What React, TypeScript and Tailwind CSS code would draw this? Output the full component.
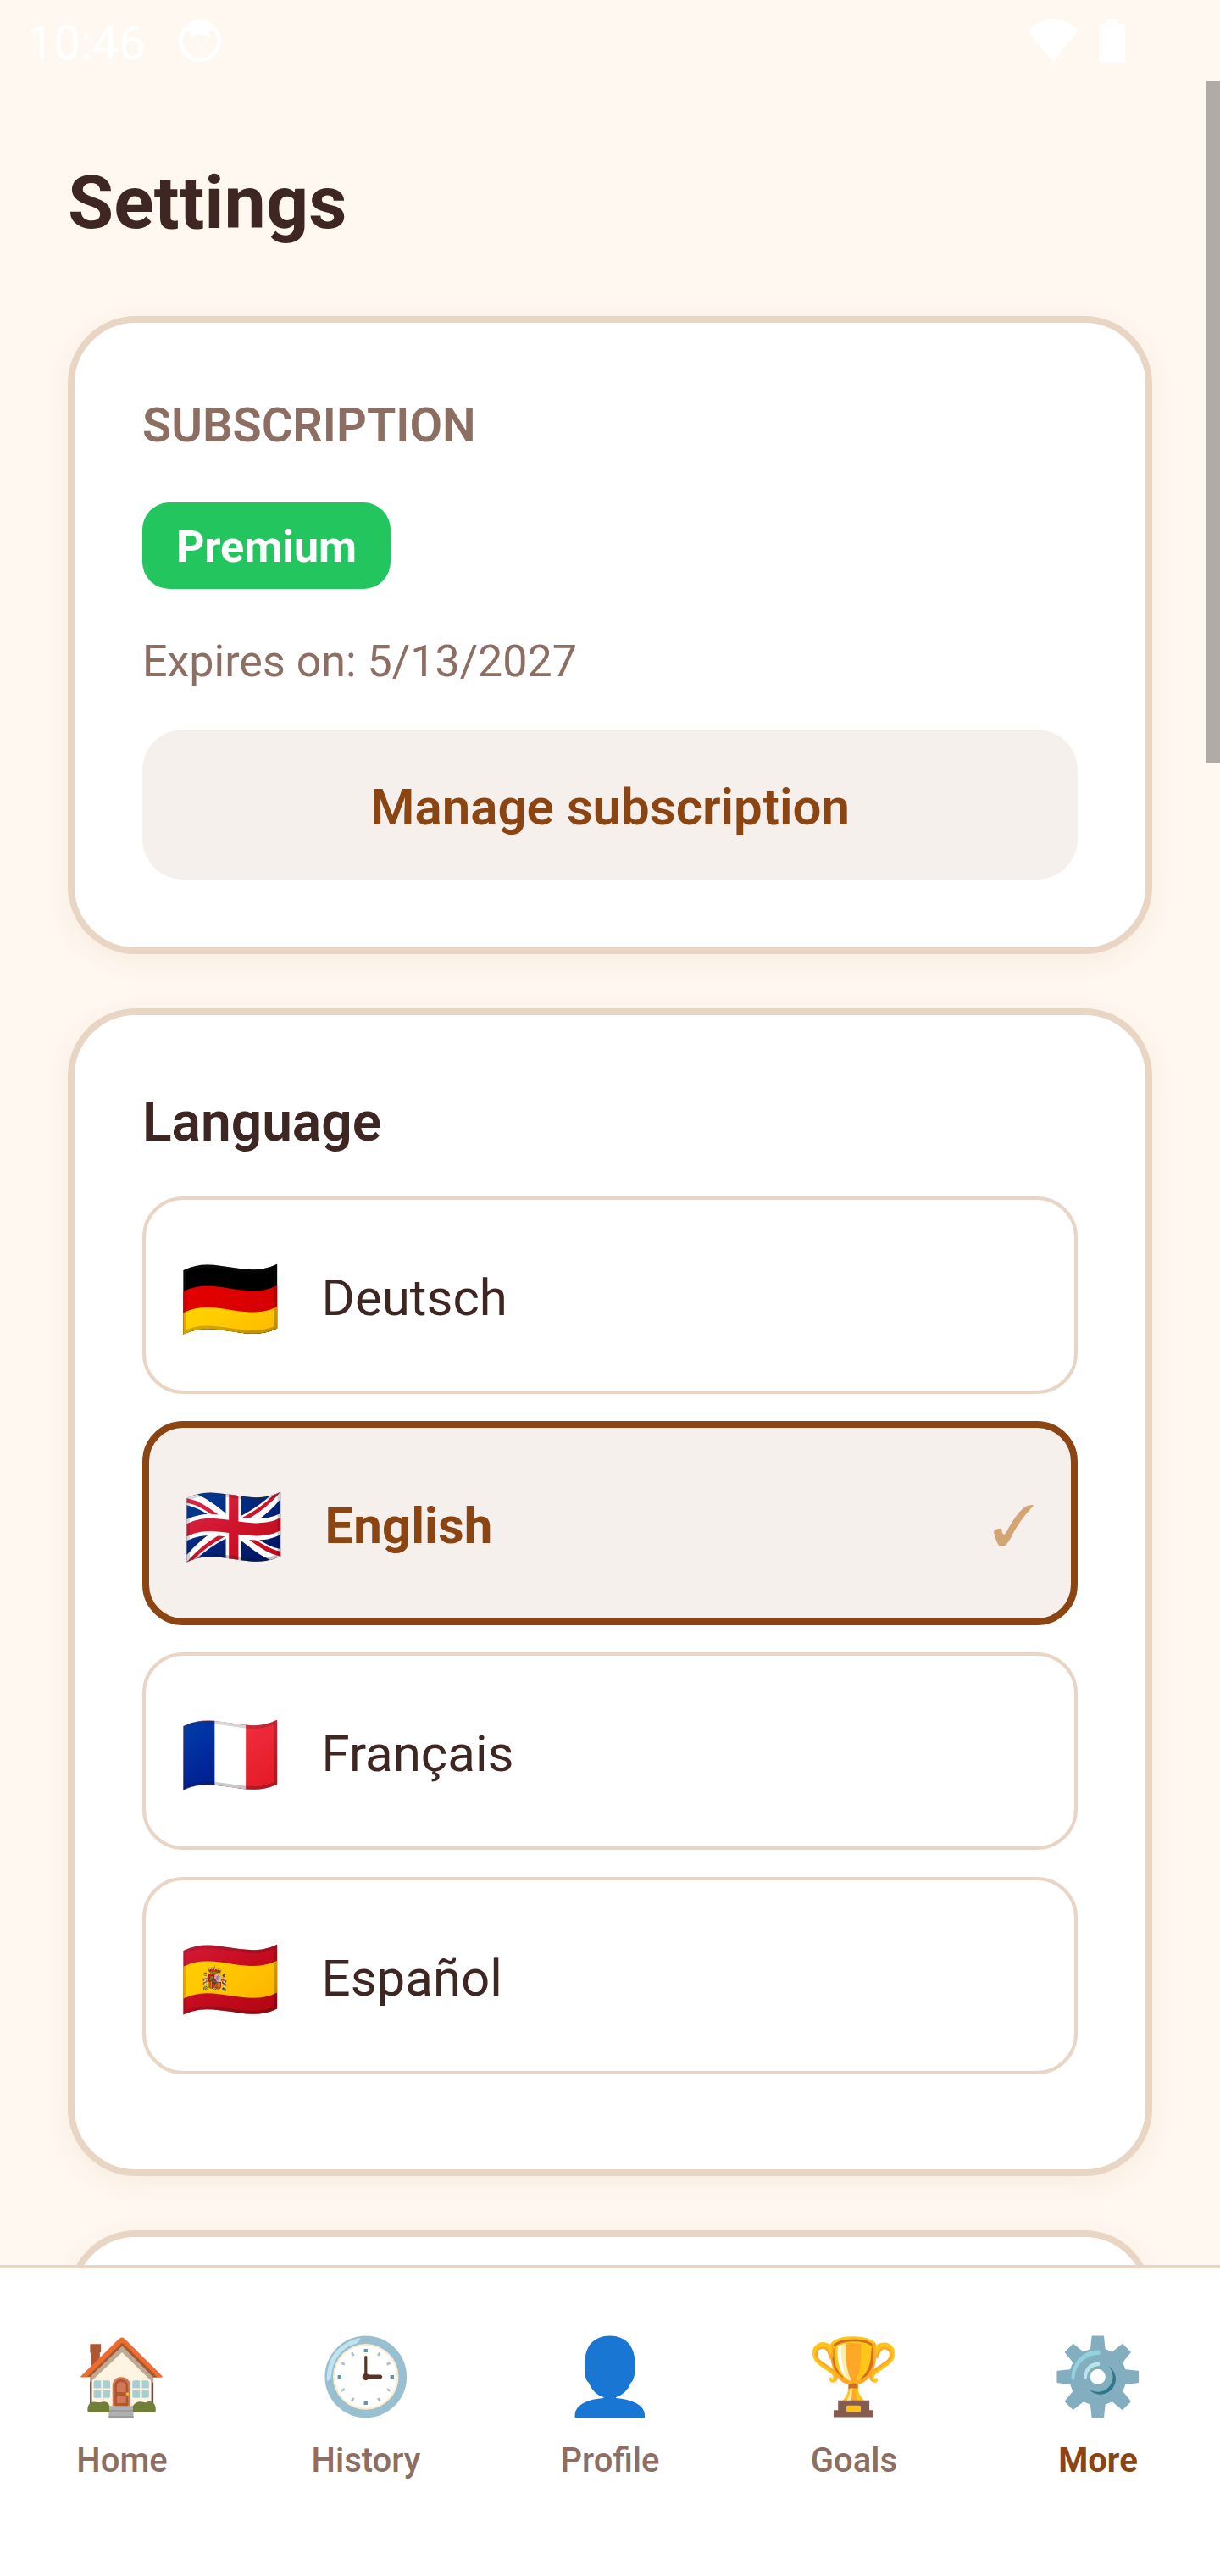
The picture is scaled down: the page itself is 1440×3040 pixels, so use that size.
import { useState } from "react";

interface Language {
  code: string;
  flag: string;
  name: string;
}

const LANGUAGES: Language[] = [
  { code: "de", flag: "🇩🇪", name: "Deutsch" },
  { code: "en", flag: "🇬🇧", name: "English" },
  { code: "fr", flag: "🇫🇷", name: "Français" },
  { code: "es", flag: "🇪🇸", name: "Español" },
];

const TABS = [
  { id: "home", icon: "🏠", label: "Home" },
  { id: "history", icon: "🕒", label: "History" },
  { id: "profile", icon: "👤", label: "Profile" },
  { id: "goals", icon: "🏆", label: "Goals" },
  { id: "more", icon: "⚙️", label: "More" },
];

const CARD =
  "shrink-0 rounded-[80px] border-8 border-[#E8D5C4] bg-white p-20 shadow-[0_8px_32px_rgba(139,69,19,0.07)]";

function StatusBar() {
  return (
    <div className="flex h-24 shrink-0 items-center pl-8 pr-28 text-white">
      <span className="pt-[6px] text-[56px] leading-[64px]">10:46</span>
      <svg className="ml-10" width="50" height="50" viewBox="0 0 50 50" fill="none">
        <circle cx="25" cy="25" r="22.5" stroke="currentColor" strokeWidth="5" />
        <path d="M8 14C12 6 18 3 25 3s13 3 17 11l-5-1-2 2 3 6-3 2-4-5H19l-4 5-3-2 3-6-2-2z" fill="currentColor" />
        <circle cx="14" cy="31" r="1.5" fill="currentColor" />
        <circle cx="29" cy="33" r="1.5" fill="currentColor" />
        <circle cx="32" cy="24" r="1.5" fill="currentColor" />
      </svg>
      <svg className="ml-auto" width="60" height="50" viewBox="0 0 60 50" fill="currentColor">
        <path d="M0 13C8 5 18 0 30 0s22 5 30 13L30 50z" />
      </svg>
      <svg className="ml-6" width="31" height="51" viewBox="0 0 31 51" fill="currentColor">
        <path d="M9 0h13v5h6a3 3 0 0 1 3 3v40a3 3 0 0 1-3 3H3a3 3 0 0 1-3-3V8a3 3 0 0 1 3-3h6z" />
      </svg>
    </div>
  );
}

function CheckMark() {
  return (
    <svg className="ml-auto mr-1 mt-[6px]" width="47" height="49" viewBox="0 0 47 49" fill="#D4A574">
      <path d="M0 31Q4 27 9 28Q10 34 12 35Q14 34 17 28Q27 10 36 3Q39 0 47 0Q47 1 44 4Q32 17 23 33Q17 46 13 48Q10 50 6 48Q1 40 0 31Z" />
    </svg>
  );
}

export default function App() {
  const [language, setLanguage] = useState("en");
  const [tab, setTab] = useState("more");

  return (
    <div className="flex h-screen flex-col bg-[#FFF8F0] font-['Roboto','Noto_Color_Emoji',sans-serif] text-[#3E2723]">
      <StatusBar />

      <main className="relative flex min-h-0 flex-1 flex-col overflow-hidden px-20 pt-20">
        <h1 className="mb-[71px] text-[88px] font-bold leading-[126px]">Settings</h1>

        <div className="flex flex-col gap-16">
          <section className={CARD}>
            <h2 className="mb-[50px] text-[56px] font-semibold leading-[82px] text-[#8D6E63]">SUBSCRIPTION</h2>
            <div className="flex">
              <span className="rounded-[32px] bg-[#22C55E] px-10 pb-[14px] pt-[18px] text-[52px] font-bold leading-[70px] text-white">
                Premium
              </span>
            </div>
            <p className="mb-[43px] mt-[49px] text-[52px] leading-[74px] text-[#8D6E63]">Expires on: 5/13/2027</p>
            <button
              type="button"
              className="block w-full rounded-[48px] bg-[#F5F0EB] pb-[45px] pt-[52px] text-center text-[60px] font-semibold leading-[80px] text-[#8B4513]"
            >
              Manage subscription
            </button>
          </section>

          <section className={CARD}>
            <h2 className="mb-10 text-[64px] font-semibold leading-[94px]">Language</h2>
            <div className="mb-8 flex flex-col gap-8">
              {LANGUAGES.map((item) => {
                const isSelected = item.code === language;
                return (
                  <button
                    key={item.code}
                    type="button"
                    aria-pressed={isSelected}
                    onClick={() => setLanguage(item.code)}
                    className={`flex items-center rounded-[48px] px-10 py-[51px] text-left text-[60px] leading-[80px] ${
                      isSelected
                        ? "border-8 border-[#8B4513] bg-[#F5F0EB] font-bold text-[#8B4513]"
                        : "border-4 border-[#E8D5C4] bg-white"
                    }`}
                  >
                    <span className="mr-12 pt-[10px] text-[96px] font-normal leading-[113px]">{item.flag}</span>
                    <span className="pt-[6px]">{item.name}</span>
                    {isSelected ? <CheckMark /> : null}
                  </button>
                );
              })}
            </div>
          </section>

          <section className={`${CARD} h-[400px]`} />
        </div>

        {/* scroll indicator */}
        <div className="absolute right-0 top-0 h-[805px] w-4 bg-[#B0ABA6]" />
      </main>

      <nav className="relative grid shrink-0 grid-cols-5 border-t-4 border-[#E8D5C4] bg-white pb-[108px] pt-[74px]">
        {TABS.map((item) => (
          <a
            key={item.id}
            href={`#${item.id}`}
            onClick={() => setTab(item.id)}
            className={`flex flex-col items-center text-[40px] leading-[56px] ${
              item.id === tab ? "font-bold text-[#8B4513]" : "font-medium text-[#8D6E63]"
            }`}
          >
            <span className="mb-[18px] text-[88px] font-normal leading-[107px]">{item.icon}</span>
            {item.label}
          </a>
        ))}
      </nav>
    </div>
  );
}
